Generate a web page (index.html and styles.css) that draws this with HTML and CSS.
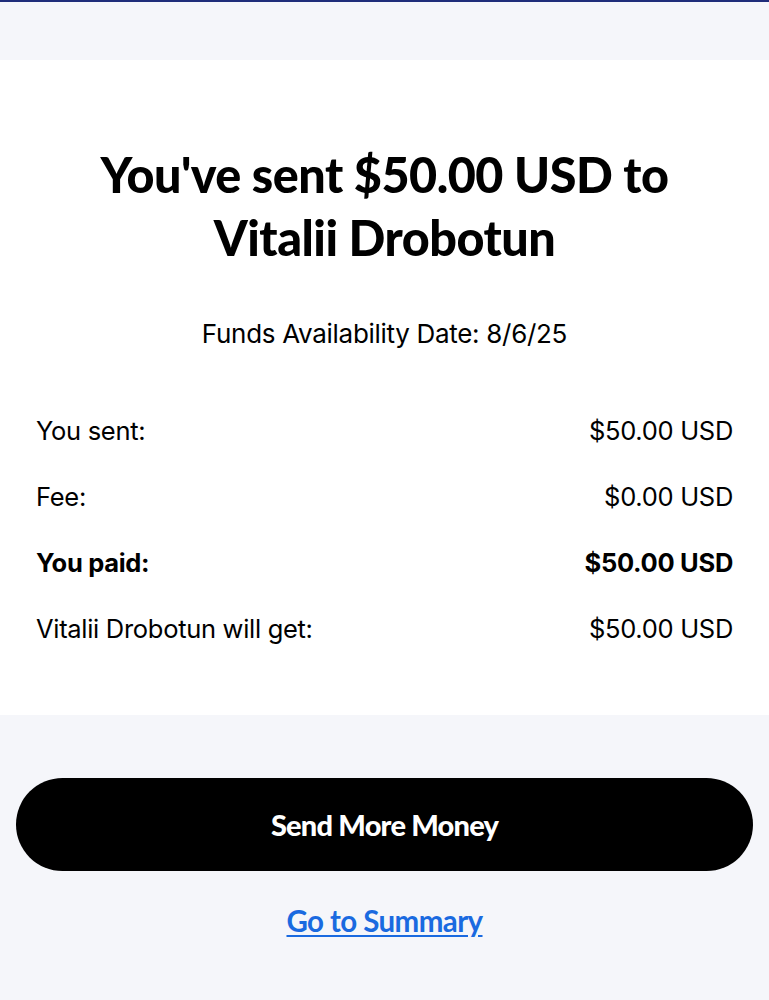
FILE: index.html
```html
<!DOCTYPE html>
<html>
<head>
<meta charset="utf-8">
<link rel="stylesheet" href="styles.css">
</head>
<body>
<div class="topbar"></div>
<div class="header-space"></div>
<main class="card">
  <h1 class="title">You've sent $50.00 USD to Vitalii Drobotun</h1>
  <p class="date">Funds Availability Date: 8/6/25</p>
  <div class="rows">
    <div class="row"><span>You sent:</span><span>$50.00 USD</span></div>
    <div class="row"><span>Fee:</span><span>$0.00 USD</span></div>
    <div class="row strong"><span>You paid:</span><span>$50.00 USD</span></div>
    <div class="row"><span>Vitalii Drobotun will get:</span><span>$50.00 USD</span></div>
  </div>
</main>
<section class="actions">
  <button class="btn">Send More Money</button>
  <a class="link" href="#">Go to Summary</a>
</section>
</body>
</html>
```
FILE: styles.css
```css
html, body {
  margin: 0;
  padding: 0;
  background: #f5f6fa;
  font-family: Inter, "Liberation Sans", sans-serif;
  color: #000;
}
.topbar {
  height: 2px;
  background: #1f2d7a;
}
.header-space {
  height: 58px;
  background: #f5f6fa;
}
.card {
  background: #fff;
  padding: 83px 36px 71px;
}
.title {
  margin: 0 auto;
  max-width: 640px;
  text-align: center;
  font-family: Lato, sans-serif;
  font-weight: 900;
  font-size: 48.5px;
  line-height: 63px;
  letter-spacing: -0.5px;
}
.date {
  margin: 50px 0 0;
  text-align: center;
  font-size: 26px;
  line-height: 30px;
  letter-spacing: -0.3px;
}
.rows {
  margin-top: 67px;
  display: flex;
  flex-direction: column;
  gap: 36px;
}
.row {
  display: flex;
  justify-content: space-between;
  font-size: 25.5px;
  line-height: 30px;
  letter-spacing: -0.3px;
}
.row.strong {
  font-weight: 700;
}
.actions {
  display: flex;
  flex-direction: column;
  align-items: center;
  padding: 63px 16px 50px;
}
.btn {
  width: 100%;
  height: 93px;
  border: none;
  border-radius: 47px;
  background: #000;
  color: #fff;
  font-family: Lato, sans-serif;
  font-weight: 900;
  font-size: 29px;
  letter-spacing: -0.8px;
}
.link {
  margin-top: 32px;
  color: #1a6ae0;
  font-family: Lato, sans-serif;
  font-weight: 700;
  font-size: 29.5px;
  letter-spacing: -0.6px;
  text-decoration: underline;
  text-underline-offset: 3px;
}
```
